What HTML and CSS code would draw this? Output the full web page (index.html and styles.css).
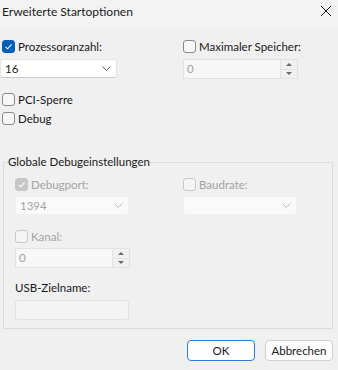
FILE: index.html
```html
<!DOCTYPE html>
<html lang="de">
<head>
  <meta charset="UTF-8">
  <meta name="viewport" content="width=device-width, initial-scale=1.0">
  <title>Erweiterte Startoptionen</title>
  <link rel="stylesheet" href="styles.css">
</head>
<body>
  <!-- Title bar -->
  <div class="titlebar">
    <span class="title">Erweiterte Startoptionen</span>
    <svg class="close" width="12" height="12" viewBox="0 0 12 12">
      <path d="M1 1 L11 11 M11 1 L1 11" stroke="#1a1a1a" stroke-width="1" fill="none"/>
    </svg>
  </div>

  <!-- Top options -->
  <div class="options">
    <div class="col">
      <label class="check-row edge">
        <span class="box checked">
          <svg width="9" height="9" viewBox="0 0 9 9"><path d="M1.5 4.8 L3.6 6.8 L7.6 2.4" stroke="#fff" stroke-width="1.1" fill="none"/></svg>
        </span>
        Prozessoranzahl:
      </label>
      <div class="combo wide">
        <span>16</span>
        <svg class="chev" width="9" height="5" viewBox="0 0 9 5"><path d="M0.5 0.5 L4.5 4.5 L8.5 0.5" stroke="#606060" stroke-width="1" fill="none"/></svg>
      </div>
    </div>
    <div class="col">
      <label class="check-row">
        <span class="box"></span>
        Maximaler Speicher:
      </label>
      <div class="spin">
        <span class="spin-value">0</span>
        <span class="spin-buttons">
          <span class="arrow up"></span>
          <span class="arrow down"></span>
        </span>
      </div>
    </div>
  </div>

  <div class="flags">
    <label class="check-row edge"><span class="box"></span>PCI-Sperre</label>
    <label class="check-row edge"><span class="box"></span>Debug</label>
  </div>

  <!-- Debug settings -->
  <fieldset class="group">
    <legend>Globale Debugeinstellungen</legend>
    <div class="group-body">
      <div class="group-grid">
        <div class="col">
          <label class="check-row disabled">
            <span class="box checked">
              <svg width="9" height="9" viewBox="0 0 9 9"><path d="M1.5 4.8 L3.6 6.8 L7.6 2.4" stroke="#fff" stroke-width="1.1" fill="none"/></svg>
            </span>
            Debugport:
          </label>
          <div class="combo off">
            <span>1394</span>
            <svg class="chev" width="9" height="5" viewBox="0 0 9 5"><path d="M0.5 0.5 L4.5 4.5 L8.5 0.5" stroke="#b8b8b8" stroke-width="1" fill="none"/></svg>
          </div>
        </div>
        <div class="col">
          <label class="check-row disabled"><span class="box"></span>Baudrate:</label>
          <div class="combo off">
            <span></span>
            <svg class="chev" width="9" height="5" viewBox="0 0 9 5"><path d="M0.5 0.5 L4.5 4.5 L8.5 0.5" stroke="#b8b8b8" stroke-width="1" fill="none"/></svg>
          </div>
        </div>
      </div>

      <label class="check-row disabled kanal"><span class="box"></span>Kanal:</label>
      <div class="spin">
        <span class="spin-value">0</span>
        <span class="spin-buttons">
          <span class="arrow up"></span>
          <span class="arrow down"></span>
        </span>
      </div>

      <div class="field-label">USB-Zielname:</div>
      <div class="textbox"></div>
    </div>
  </fieldset>

  <!-- Buttons -->
  <div class="buttons">
    <button class="btn default">OK</button>
    <button class="btn">Abbrechen</button>
  </div>
</body>
</html>
```

FILE: styles.css
```css
/* General */
body {
  margin: 0;
  background-color: #f0f0f0;
  font-family: 'Lato', 'Noto Sans', sans-serif;
  font-size: 11.5px;
  color: #1a1a1a;
  width: 338px;
  height: 370px;
  overflow: hidden;
}

/* Title bar */
.titlebar {
  height: 28px;
  background-color: #f3f3f3;
  display: flex;
  align-items: center;
  justify-content: space-between;
  padding: 0 6px 6px 2px;
  box-sizing: border-box;
}

.title {
  font-size: 12px;
}

/* Checkbox rows */
.check-row {
  display: flex;
  align-items: center;
  gap: 3px;
  height: 14px;
  white-space: nowrap;
}

.check-row.edge {
  margin-left: 2px;
}

.box {
  flex-shrink: 0;
  width: 11px;
  height: 11px;
  border: 1px solid #8a8a8a;
  border-radius: 3px;
  background-color: #f7f7f7;
  display: flex;
  align-items: center;
  justify-content: center;
}

.box.checked {
  background-color: #005fb8;
  border-color: #005fb8;
}

.disabled {
  color: #a3a3a3;
}

.disabled .box {
  border-color: #c8c8c8;
  background-color: #f5f5f5;
}

.disabled .box.checked {
  background-color: #c7c7c7;
  border-color: #c7c7c7;
}

/* Top options */
.options {
  display: grid;
  grid-template-columns: 183px 155px;
  padding-top: 11px;
}

.col {
  display: flex;
  flex-direction: column;
  align-items: flex-start;
  gap: 6px;
}

.combo {
  height: 19px;
  width: 114px;
  box-sizing: border-box;
  background-color: #fff;
  border: 1px solid #e5e5e5;
  border-bottom-color: #c9c9c9;
  border-radius: 3px;
  display: flex;
  align-items: center;
  justify-content: space-between;
  padding: 0 5px 0 4px;
}

.combo.wide {
  width: 117px;
}

.combo.off {
  background-color: #fafafa;
  border-color: #f0f0f0;
  color: #a3a3a3;
}

.spin {
  display: flex;
  height: 20px;
  width: 115px;
  box-sizing: border-box;
  background-color: #f7f7f7;
  border: 1px solid #e2e2e2;
}

.spin-value {
  flex: 1;
  padding-left: 3px;
  color: #a3a3a3;
  line-height: 18px;
}

.spin-buttons {
  width: 16px;
  display: flex;
  flex-direction: column;
  border-left: 1px solid #e2e2e2;
  background-color: #f0f0f0;
}

.arrow {
  flex: 1;
  display: flex;
  align-items: center;
  justify-content: center;
}

.arrow.up {
  border-bottom: 1px solid #e2e2e2;
}

.arrow::before {
  content: '';
  border-left: 3px solid transparent;
  border-right: 3px solid transparent;
}

.arrow.up::before {
  border-bottom: 3px solid #6a6a6a;
}

.arrow.down::before {
  border-top: 3px solid #6a6a6a;
}

.flags {
  display: flex;
  flex-direction: column;
  gap: 5px;
  margin-top: 13px;
}

/* Group box */
.group {
  margin: 29px 5px 0 3px;
  padding: 0 4px 8px;
  border: 1px solid #dcdcdc;
}

.group legend {
  padding: 0;
  line-height: 16px;
  color: #1a1a1a;
}

.group-body {
  padding-left: 7px;
  padding-top: 7px;
}

.group-grid {
  display: grid;
  grid-template-columns: 168px 114px;
}

.group-grid .col {
  gap: 5px;
}

.kanal {
  margin-top: 14px;
  margin-bottom: 5px;
}

.field-label {
  margin-top: 13px;
  height: 14px;
  line-height: 14px;
}

.textbox {
  margin-top: 5px;
  width: 114px;
  height: 20px;
  box-sizing: border-box;
  border: 1px solid #e2e2e2;
  border-radius: 3px;
  background-color: #f3f3f3;
}

/* Buttons */
.buttons {
  display: flex;
  justify-content: flex-end;
  gap: 10px;
  margin: 11px 5px 0 0;
}

.btn {
  width: 68px;
  height: 21px;
  font-family: inherit;
  font-size: 11.5px;
  color: #1a1a1a;
  background-color: #fdfdfd;
  border: 1px solid #d0d0d0;
  border-radius: 4px;
  padding: 0;
}

.btn.default {
  border-color: #2a7fd4;
}
```
